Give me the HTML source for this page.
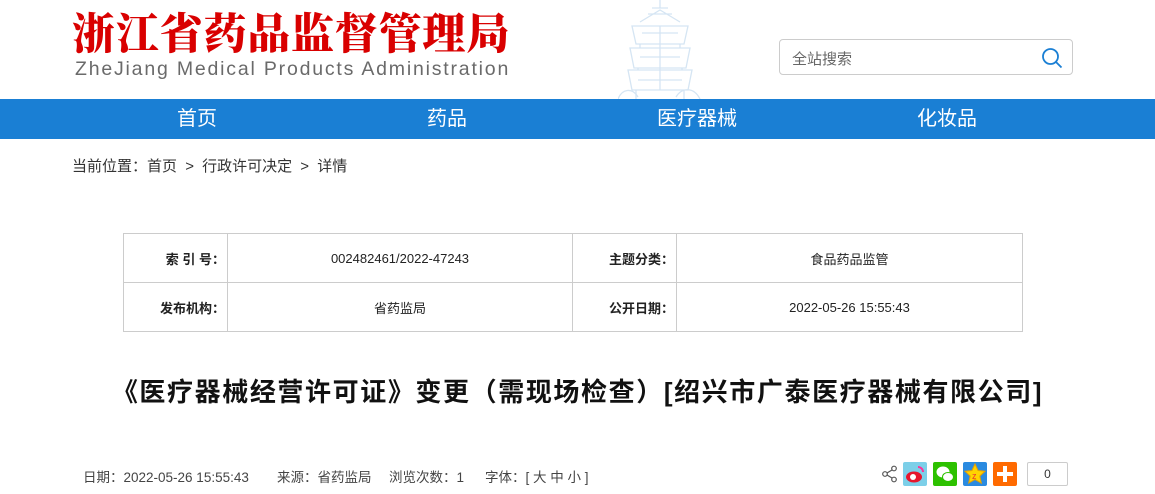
<!DOCTYPE html>
<html><head><meta charset="utf-8"><style>
*{margin:0;padding:0;box-sizing:border-box}
body{width:1155px;height:494px;background:#fff;position:relative;overflow:hidden;font-family:"Liberation Sans","Noto Sans CJK SC",sans-serif;color:#333}
.abs{position:absolute;white-space:nowrap}
.c{display:inline-block;width:1em;text-align:center}
.logo{left:72px;top:7px;font-family:"Noto Serif CJK SC",serif;font-weight:900;font-size:43px;color:#d90000;line-height:50px;letter-spacing:0.8px}
.en{left:75px;top:58px;font-size:19.5px;color:#6a6a6a;letter-spacing:1.8px;line-height:22px}
.search{left:779px;top:39px;width:294px;height:36px;border:1px solid #ccc;border-radius:4px}
.search span{position:absolute;left:12px;top:8px;font-size:15px;color:#666}
.nav{left:0;top:99px;width:1155px;height:40px;background:#1a7fd4}
.nav span{position:absolute;top:8px;width:250px;text-align:center;color:#fff;font-size:20px;line-height:24px}
.bc{left:72px;top:155px;font-size:15px;color:#333}
table{position:absolute;left:123px;top:233px;border-collapse:collapse;width:900px}
td{border:1px solid #ccc;height:49px;font-size:13px;text-align:center;color:#222}
td.l{font-weight:bold;text-align:right;padding-right:2px;width:104px}
.title{left:0;width:1155px;top:372px;text-align:center;font-size:26px;font-weight:bold;color:#111;letter-spacing:1.6px}
.meta{top:466px;font-size:13.5px;color:#444}
.ic{position:absolute;top:462px;width:24px;height:24px;border-radius:2px}
</style></head><body>
<svg class="abs" style="left:618px;top:0" width="130" height="99" viewBox="0 0 130 99" fill="none" stroke="#d5e5f3" stroke-width="1.3">
<path d="M42 0v8M34 8h16M30 14h24M22 22l20-12 20 12M14 26h56l-4 18H18zM12 48h60l-4 20H16zM10 70h64l-4 20H14zM22 44v4M62 44v4M20 68v2M64 68v2M18 90v9M66 90v9M0 99c4-10 14-12 20-2M58 97c6-10 18-10 24 2"/>
<path d="M24 33h36M22 57h40M20 80h44M42 26v64"/>
</svg>
<div class="abs logo">浙江省药品监督管理局</div>
<div class="abs en">ZheJiang Medical Products Administration</div>
<div class="abs search"><span>全站搜索</span>
<svg style="position:absolute;right:9px;top:7px" width="22" height="22" viewBox="0 0 22 22" fill="none" stroke="#1a7fd4" stroke-width="1.8"><circle cx="9.5" cy="9.5" r="7.5"/><path d="M15 15l5.5 5.5"/></svg></div>
<div class="abs nav"><span style="left:72px">首页</span><span style="left:322px">药品</span><span style="left:572px">医疗器械</span><span style="left:822px">化妆品</span></div>
<div class="abs bc">当前位置<span class="c">：</span>首页 <span style="margin:0 4px">&gt;</span> 行政许可决定 <span style="margin:0 4px">&gt;</span> 详情</div>
<table>
<tr><td class="l">索 引 号<span class="c">：</span></td><td style="width:345px">002482461/2022-47243</td><td class="l">主题分类<span class="c">：</span></td><td>食品药品监管</td></tr>
<tr><td class="l">发布机构<span class="c">：</span></td><td>省药监局</td><td class="l">公开日期<span class="c">：</span></td><td>2022-05-26 15:55:43</td></tr>
</table>
<div class="abs title">《医疗器械经营许可证》变更（需现场检查）[绍兴市广泰医疗器械有限公司]</div>
<div class="abs meta" style="left:83px">日期<span class="c">：</span>2022-05-26 15:55:43</div>
<div class="abs meta" style="left:277px">来源<span class="c">：</span>省药监局</div>
<div class="abs meta" style="left:389px">浏览次数<span class="c">：</span>1</div>
<div class="abs meta" style="left:485px">字体<span class="c">：</span>[ 大 中 小 ]</div>
<svg class="abs" style="left:882px;top:465px" width="16" height="18" viewBox="0 0 16 18" fill="none" stroke="#555" stroke-width="1.2"><circle cx="3" cy="9" r="2.3"/><circle cx="12" cy="3.5" r="2.3"/><circle cx="12" cy="14.5" r="2.3"/><path d="M5 8l5-3M5 10l5 3"/></svg>
<div class="ic" style="left:903px;background:#7ccfe8"><svg width="24" height="24"><ellipse cx="11" cy="15" rx="8" ry="5.5" fill="#e6162d"/><circle cx="10" cy="15" r="3" fill="#fff"/><path d="M15 5a5 5 0 0 1 5 5" stroke="#f39" stroke-width="2" fill="none"/></svg></div>
<div class="ic" style="left:933px;background:#2dc100"><svg width="24" height="24"><ellipse cx="10" cy="10" rx="6.5" ry="5.5" fill="#fff"/><ellipse cx="15" cy="15" rx="5.5" ry="4.5" fill="#fff" stroke="#2dc100"/></svg></div>
<div class="ic" style="left:963px;background:#2a8ae0"><svg width="24" height="24"><path d="M12 2l3 6.5 7 .8-5.2 4.8 1.5 7L12 17.5 5.7 21l1.5-7L2 9.3l7-.8z" fill="#ffd400" stroke="#e8a000"/><text x="9" y="17" font-size="9" fill="#e33" font-family="Liberation Sans">z</text></svg></div>
<div class="ic" style="left:993px;background:#ff6a00"><svg width="24" height="24"><path d="M12 4v16M4 12h16" stroke="#fff" stroke-width="4"/></svg></div>
<div class="abs" style="left:1027px;top:462px;width:41px;height:24px;border:1px solid #ccc;border-radius:2px;text-align:center;font-size:12px;line-height:22px;color:#333">0</div>
</body></html>
